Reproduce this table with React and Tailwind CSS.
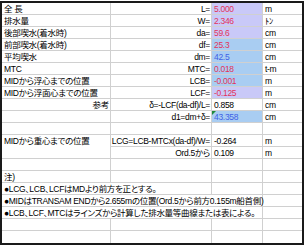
import React from "react";

const LAV = "bg-[#c9c9f8]";
const BLU = "bg-[#a9cdf2]";
const RED = "text-[#e2345a]";
const BLUET = "text-[#3f62e6]";

const rows = [
  { l: "全 長", f: "L=", v: "5.000", vc: RED, bg: LAV, u: "m" },
  { l: "排水量", f: "W=", v: "2.346", vc: RED, bg: LAV, u: "ﾄﾝ" },
  { l: "後部喫水(着水時)", f: "da=", v: "59.6", vc: RED, bg: LAV, u: "cm" },
  { l: "前部喫水(着水時)", f: "df=", v: "25.3", vc: RED, bg: BLU, u: "cm" },
  { l: "平均喫水", f: "dm=", v: "42.5", vc: BLUET, bg: BLU, u: "cm" },
  { l: "MTC", f: "MTC=", v: "0.018", vc: RED, bg: BLU, u: "t-m" },
  { l: "MIDから浮心までの位置", f: "LCB=", v: "-0.001", vc: RED, bg: BLU, u: "m" },
  { l: "MIDから浮面心までの位置", f: "LCF=", v: "-0.125", vc: RED, bg: LAV, u: "m" },
  { l: "参考", right: true, f: "δ=-LCF(da-df)/L=", v: "0.858", vc: "text-black", bg: "", u: "cm" },
  { l: "", f: "d1=dm+δ=", v: "43.358", vc: BLUET, bg: BLU, u: "cm", tri: true },
  { l: "", f: "", v: "", bg: "", u: "" },
  { l: "MIDから重心までの位置", noB1: true, f: "LCG=LCB-MTCx(da-df)/W=", v: "-0.264", vc: "text-black", bg: "", u: "m" },
  { l: "", f: "Ord.5から", v: "0.109", vc: "text-black", bg: "", u: "m" },
  { l: "", f: "", v: "", bg: "", u: "" },
];

const notes = [
  { t: "注)", span: 1 },
  { t: "●LCG、LCB、LCFはMDより前方を正とする。", span: 2 },
  { t: "●MIDはTRANSAM ENDから2.655mの位置(Ord.5から前方0.155m船首側)", span: 3 },
  { t: "●LCB、LCF、MTCはラインズから計算した排水量等曲線または表による。", span: 3 },
  { t: "", span: 1 },
  { t: "", span: 1 },
];

const cell = "h-[12px] border-[#d0d0d0] flex items-center whitespace-nowrap leading-[10px]";

export default function App() {
  return (
    <div
      className="w-[307px] h-[250px] bg-white overflow-hidden pt-[1px] text-[8.5px] tracking-[-0.3px] text-black [font-feature-settings:'palt']"
      style={{ fontFamily: '"Liberation Sans", "Noto Sans CJK JP", sans-serif' }}
    >
      <div className="w-[304px] border-2 border-[#1a1a1a] grid grid-cols-[109px_101px_51px_39px]">
        {rows.map((r, i) => (
          <React.Fragment key={i}>
            <div className={`${cell} border-r ${r.noB1 ? "" : "border-b"} ${r.right ? "justify-end pr-[1px]" : "pl-[2px]"}`}>
              {r.l}
            </div>
            <div className={`${cell} border-r border-b justify-end pr-[1px]`}>
              <span className="whitespace-nowrap">{r.f}</span>
            </div>
            <div className={`${cell} border-r border-b pl-[2px] relative ${r.bg} ${r.vc || ""}`}>
              {r.tri && (
                <span className="absolute left-0 top-0 w-0 h-0 border-t-[4px] border-r-[4px] border-t-[#1f8a3a] border-r-transparent" />
              )}
              {r.v}
            </div>
            <div className={`${cell} border-b pl-[2px]`}>{r.u}</div>
          </React.Fragment>
        ))}
        {notes.map((n, i) => {
          const last = i === notes.length - 1;
          const b = last ? "" : "border-b";
          return (
            <React.Fragment key={"n" + i}>
              <div
                className={`${cell} ${b} border-r pl-[2px] ${
                  n.span === 1 ? "" : n.span === 2 ? "col-span-2" : "col-span-3"
                }`}
              >
                {n.t}
              </div>
              {n.span <= 1 && <div className={`${cell} ${b} border-r`} />}
              {n.span <= 2 && <div className={`${cell} ${b} border-r`} />}
              <div className={`${cell} ${b}`} />
            </React.Fragment>
          );
        })}
      </div>
    </div>
  );
}
